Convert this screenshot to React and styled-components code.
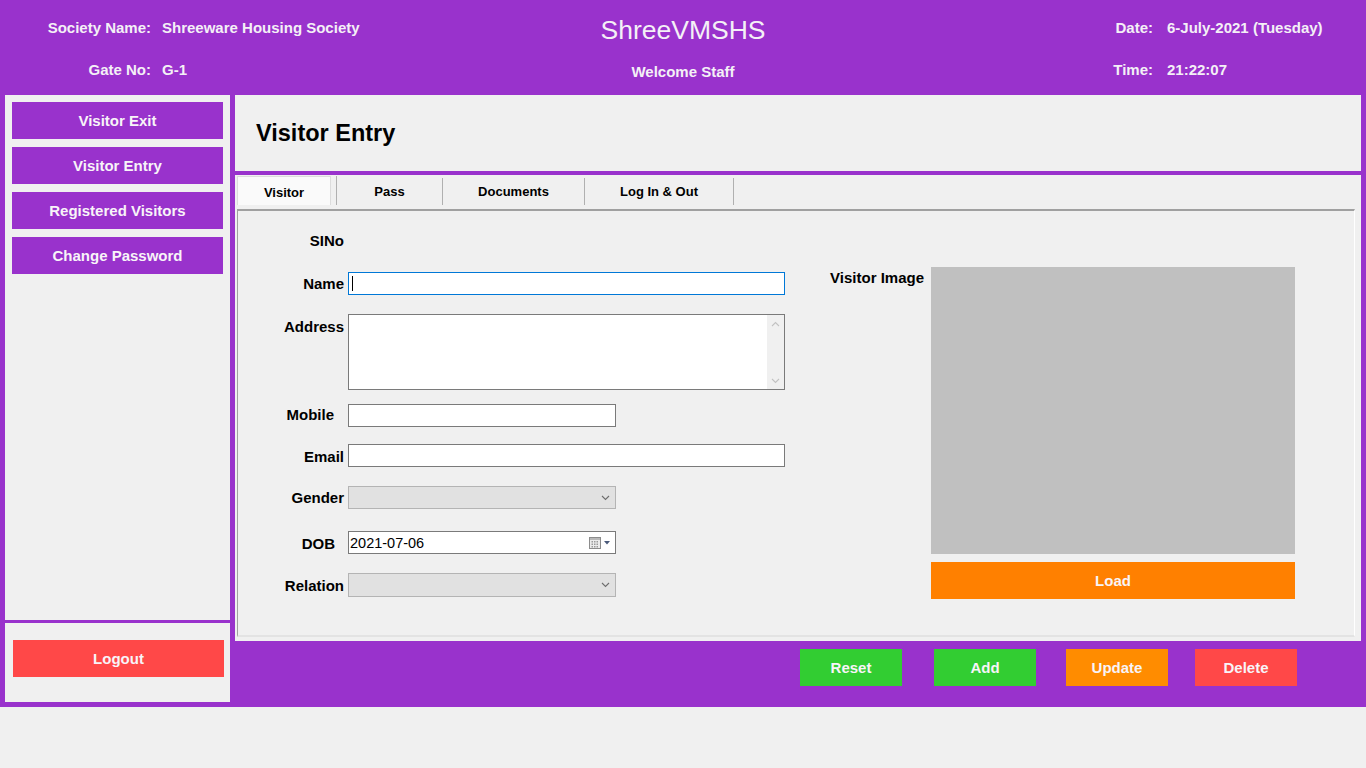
import styled, { createGlobalStyle } from "styled-components";

const GlobalStyle = createGlobalStyle`
  * {
    box-sizing: border-box;
  }
  body {
    margin: 0;
    background: #f0f0f0;
    font-family: "Liberation Sans", Arial, sans-serif;
  }
`;

const PURPLE = "#9932cc";

function ChevronDown({ color = "#6d6d6d" }) {
  return (
    <svg width="9" height="6" viewBox="0 0 9 6">
      <path d="M1 1l3.5 3.5L8 1" stroke={color} strokeWidth="1.1" fill="none" />
    </svg>
  );
}

function ChevronUp({ color = "#c2c2c2" }) {
  return (
    <svg width="9" height="6" viewBox="0 0 9 6">
      <path d="M1 5l3.5-3.5L8 5" stroke={color} strokeWidth="1.1" fill="none" />
    </svg>
  );
}

function CalendarIcon() {
  return (
    <svg width="22" height="14" viewBox="0 0 22 14">
      <rect x="0.5" y="1.5" width="11" height="11" fill="#ececec" stroke="#8c8c8c" />
      <rect x="1" y="2" width="10" height="2" fill="#b8b8b8" />
      {[5, 7.5, 10].map((y) =>
        [2.5, 5, 7.5].map((x) => (
          <rect key={`${x}-${y}`} x={x} y={y} width="1.5" height="1.5" fill="#9a9a9a" />
        ))
      )}
      <path d="M15 5h6l-3 3.5z" fill="#4a5a7a" />
    </svg>
  );
}

export default function App() {
  const tabs = [
    { label: "Visitor", width: 100, selected: true },
    { label: "Pass", width: 106 },
    { label: "Documents", width: 142 },
    { label: "Log In & Out", width: 149 },
  ];

  return (
    <>
      <GlobalStyle />
      <Frame>
        <Header>
          <InfoGrid $labelWidth={151} $gap={11}>
            <InfoLabel>Society Name:</InfoLabel>
            <InfoValue>Shreeware Housing Society</InfoValue>
            <InfoLabel>Gate No:</InfoLabel>
            <InfoValue>G-1</InfoValue>
          </InfoGrid>
          <Brand>
            <BrandTitle>ShreeVMSHS</BrandTitle>
            <Welcome>Welcome Staff</Welcome>
          </Brand>
          <InfoGrid $labelWidth={242} $gap={14}>
            <InfoLabel>Date:</InfoLabel>
            <InfoValue>6-July-2021 (Tuesday)</InfoValue>
            <InfoLabel>Time:</InfoLabel>
            <InfoValue>21:22:07</InfoValue>
          </InfoGrid>
        </Header>

        <Body>
          <Sidebar>
            <NavPanel>
              <ActionButton $bg={PURPLE} $w={211}>Visitor Exit</ActionButton>
              <ActionButton $bg={PURPLE} $w={211}>Visitor Entry</ActionButton>
              <ActionButton $bg={PURPLE} $w={211}>Registered Visitors</ActionButton>
              <ActionButton $bg={PURPLE} $w={211}>Change Password</ActionButton>
            </NavPanel>
            <LogoutPanel>
              <ActionButton $bg="#ff4848" $w={211}>Logout</ActionButton>
            </LogoutPanel>
          </Sidebar>

          <Main>
            <TitlePanel>
              <PageTitle>Visitor Entry</PageTitle>
            </TitlePanel>

            <TabPanel>
              <TabStrip>
                {tabs.map((t) => (
                  <Tab key={t.label} $w={t.width} $selected={t.selected}>
                    {t.selected ? <TabFace>{t.label}</TabFace> : t.label}
                  </Tab>
                ))}
              </TabStrip>

              <TabPage>
                <FormColumn>
                  <FieldRow $top={0} $h={22}>
                    <FieldLabel>SINo</FieldLabel>
                  </FieldRow>
                  <FieldRow $top={20} $h={23}>
                    <FieldLabel>Name</FieldLabel>
                    <TextBox $w={437} $focused>
                      <Caret />
                    </TextBox>
                  </FieldRow>
                  <FieldRow $top={19} $h={76} $alignTop>
                    <FieldLabel $padTop={4}>Address</FieldLabel>
                    <AddressBox>
                      <AddressText />
                      <ScrollTrack>
                        <ChevronUp />
                        <ChevronDown color="#c2c2c2" />
                      </ScrollTrack>
                    </AddressBox>
                  </FieldRow>
                  <FieldRow $top={14} $h={23}>
                    <FieldLabel $padRight={10} $shift={-1}>Mobile</FieldLabel>
                    <TextBox $w={268} />
                  </FieldRow>
                  <FieldRow $top={17} $h={23}>
                    <FieldLabel $shift={1}>Email</FieldLabel>
                    <TextBox $w={437} />
                  </FieldRow>
                  <FieldRow $top={19} $h={23}>
                    <FieldLabel>Gender</FieldLabel>
                    <SelectBox $w={268}>
                      <ChevronDown />
                    </SelectBox>
                  </FieldRow>
                  <FieldRow $top={22} $h={23}>
                    <FieldLabel $padRight={9} $shift={1}>DOB</FieldLabel>
                    <DateBox $w={268}>
                      <DateText>2021-07-06</DateText>
                      <CalendarIcon />
                    </DateBox>
                  </FieldRow>
                  <FieldRow $top={19} $h={24}>
                    <FieldLabel $shift={1}>Relation</FieldLabel>
                    <SelectBox $w={268}>
                      <ChevronDown />
                    </SelectBox>
                  </FieldRow>
                </FormColumn>

                <ImageBlock>
                  <FieldLabel $w={94} $padTop={2}>Visitor Image</FieldLabel>
                  <ImageColumn>
                    <ImageBox />
                    <ActionButton $bg="#ff8000" $w={364}>Load</ActionButton>
                  </ImageColumn>
                </ImageBlock>
              </TabPage>
            </TabPanel>

            <ButtonBar>
              <ActionButton $bg="#32cd32" $w={102} $offset={565}>Reset</ActionButton>
              <ActionButton $bg="#32cd32" $w={102} $offset={32}>Add</ActionButton>
              <ActionButton $bg="#ff8c00" $w={102} $offset={30}>Update</ActionButton>
              <ActionButton $bg="#ff4848" $w={102} $offset={27}>Delete</ActionButton>
            </ButtonBar>
          </Main>
        </Body>
      </Frame>
    </>
  );
}

const Frame = styled.div`
  width: 1366px;
  height: 707px;
  background: ${PURPLE};
  display: flex;
  flex-direction: column;
`;

const Header = styled.header`
  height: 95px;
  display: grid;
  grid-template-columns: 455px 1fr 455px;
  color: #f4f0f6;
`;

const InfoGrid = styled.div`
  display: grid;
  grid-template-columns: ${(p) => p.$labelWidth}px auto;
  grid-auto-rows: 42px;
  column-gap: ${(p) => p.$gap}px;
  align-items: center;
  align-content: start;
  padding-top: 6px;
  font-size: 15px;
  font-weight: bold;
`;

const InfoLabel = styled.span`
  text-align: right;
`;

const InfoValue = styled.span`
  white-space: nowrap;
`;

const Brand = styled.div`
  display: flex;
  flex-direction: column;
  align-items: center;
`;

const BrandTitle = styled.div`
  margin-top: 15px;
  height: 30px;
  line-height: 30px;
  font-size: 26.5px;
`;

const Welcome = styled.div`
  margin-top: 18px;
  line-height: 18px;
  font-size: 15px;
  font-weight: bold;
`;

const Body = styled.div`
  flex: 1;
  display: flex;
  gap: 5px;
  padding: 0 5px;
`;

const Sidebar = styled.aside`
  width: 225px;
  display: flex;
  flex-direction: column;
  gap: 3px;
  padding-bottom: 5px;
`;

const NavPanel = styled.nav`
  height: 525px;
  background: #f0f0f0;
  display: flex;
  flex-direction: column;
  gap: 8px;
  padding: 7px 7px 0 7px;
`;

const LogoutPanel = styled.div`
  flex: 1;
  background: #f0f0f0;
  padding: 17px 0 0 8px;
`;

const ActionButton = styled.button`
  width: ${(p) => p.$w}px;
  height: 37px;
  flex-shrink: 0;
  margin-left: ${(p) => p.$offset || 0}px;
  border: none;
  background: ${(p) => p.$bg};
  color: #f8f4f8;
  font-family: "Liberation Sans", Arial, sans-serif;
  font-size: 15px;
  font-weight: bold;
  padding: 0;
  cursor: pointer;
`;

const Main = styled.main`
  flex: 1;
  display: flex;
  flex-direction: column;
`;

const TitlePanel = styled.div`
  height: 76px;
  background: #f0f0f0;
  display: flex;
  align-items: center;
  padding-left: 21px;
`;

const PageTitle = styled.h1`
  margin: 0;
  font-size: 23.5px;
  font-weight: bold;
  color: #000;
`;

const TabPanel = styled.section`
  height: 466px;
  margin-top: 4px;
  background: #f0f0f0;
  display: flex;
  flex-direction: column;
  padding: 1px 6px 4px 2px;
`;

const TabStrip = styled.div`
  height: 33px;
  display: flex;
  align-items: flex-start;
`;

const Tab = styled.div`
  width: ${(p) => p.$w}px;
  height: ${(p) => (p.$selected ? 29 : 27)}px;
  margin-top: ${(p) => (p.$selected ? 0 : 2)}px;
  padding-right: ${(p) => (p.$selected ? 5 : 0)}px;
  border-right: 1px solid #b0b0b0;
  display: flex;
  align-items: center;
  justify-content: center;
  font-size: 13px;
  font-weight: bold;
  color: #000;
`;

const TabFace = styled.div`
  flex: 1;
  height: 100%;
  display: flex;
  align-items: center;
  justify-content: center;
  padding-top: 2px;
  background: #fafafa;
  border: 1px solid #dcdcdc;
  border-bottom: none;
`;

const TabPage = styled.div`
  flex: 1;
  display: flex;
  align-items: flex-start;
  padding-top: 19px;
  border-top: 2px solid #a0a0a0;
  border-left: 1px solid #a0a0a0;
  border-right: 1px solid #ffffff;
  border-bottom: 2px solid #e3e3e3;
`;

const FormColumn = styled.div`
  width: 547px;
  display: flex;
  flex-direction: column;
`;

const FieldRow = styled.div`
  display: flex;
  align-items: ${(p) => (p.$alignTop ? "flex-start" : "center")};
  gap: 4px;
  height: ${(p) => p.$h}px;
  margin-top: ${(p) => p.$top}px;
`;

const FieldLabel = styled.label`
  width: ${(p) => p.$w || 106}px;
  flex-shrink: 0;
  text-align: right;
  padding-right: ${(p) => p.$padRight || 0}px;
  padding-top: ${(p) => p.$padTop || 0}px;
  position: relative;
  top: ${(p) => p.$shift || 0}px;
  line-height: 18px;
  font-size: 15px;
  font-weight: bold;
  color: #000;
  white-space: nowrap;
`;

const TextBox = styled.div`
  width: ${(p) => p.$w}px;
  height: 100%;
  background: #fff;
  border: 1px solid ${(p) => (p.$focused ? "#0078d7" : "#7a7a7a")};
  display: flex;
  align-items: center;
  padding-left: 3px;
`;

const Caret = styled.span`
  width: 1px;
  height: 15px;
  background: #000;
`;

const AddressBox = styled.div`
  width: 437px;
  height: 100%;
  background: #fff;
  border: 1px solid #7a7a7a;
  display: flex;
`;

const AddressText = styled.div`
  flex: 1;
`;

const ScrollTrack = styled.div`
  width: 17px;
  background: #f0f0f0;
  display: flex;
  flex-direction: column;
  align-items: center;
  justify-content: space-between;
  padding: 6px 0 5px;
`;

const SelectBox = styled.div`
  width: ${(p) => p.$w}px;
  height: 100%;
  background: #e1e1e1;
  border: 1px solid #b4b4b4;
  display: flex;
  align-items: center;
  justify-content: flex-end;
  padding-right: 5px;
`;

const DateBox = styled.div`
  width: ${(p) => p.$w}px;
  height: 100%;
  background: #fff;
  border: 1px solid #7a7a7a;
  display: flex;
  align-items: center;
  justify-content: space-between;
  padding: 0 4px 0 1px;
`;

const DateText = styled.span`
  font-size: 14.5px;
  color: #000;
`;

const ImageBlock = styled.div`
  display: flex;
  align-items: flex-start;
  gap: 7px;
  margin-left: 45px;
  margin-top: 37px;
`;

const ImageColumn = styled.div`
  width: 364px;
  display: flex;
  flex-direction: column;
  gap: 8px;
`;

const ImageBox = styled.div`
  height: 287px;
  background: #c0c0c0;
`;

const ButtonBar = styled.div`
  flex: 1;
  display: flex;
  align-items: flex-start;
  padding-top: 8px;
`;
